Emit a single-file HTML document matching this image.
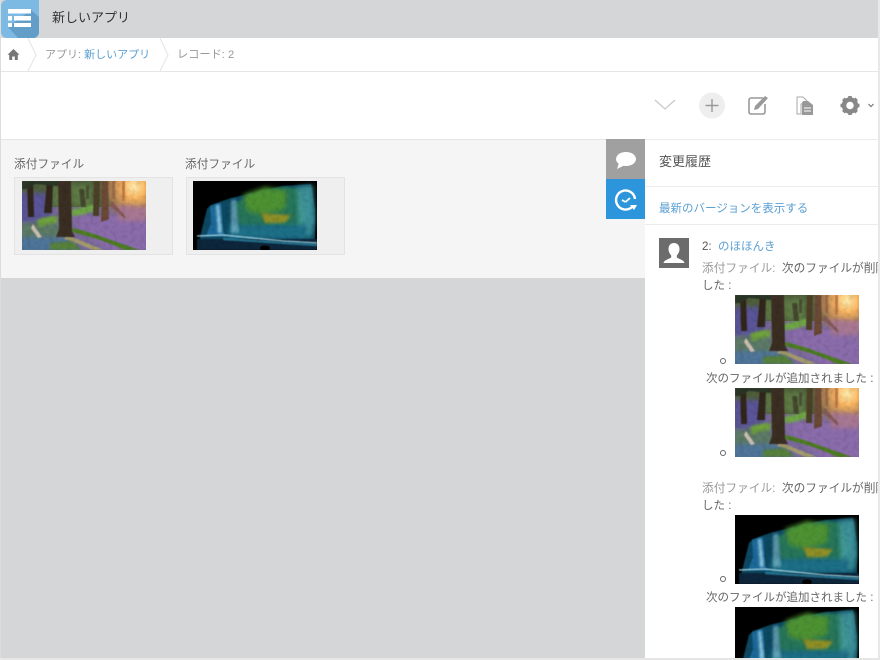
<!DOCTYPE html>
<html lang="ja"><head><meta charset="utf-8"><title>新しいアプリ</title>
<style>
html,body{margin:0;padding:0;width:880px;height:660px;overflow:hidden;background:#d5d6d8}
#w{width:880px;height:660px;position:relative;overflow:hidden;font-family:"Liberation Sans","Noto Sans CJK JP",sans-serif;font-size:11.500px;color:#777}
.a{position:absolute;white-space:nowrap}
.b{position:absolute}
.l{color:#5a9fd2}
svg.i{position:absolute;overflow:hidden}
</style></head><body><div id="w">
<svg width="0" height="0" style="position:absolute">
<defs>
<filter id="f1" x="-20%" y="-20%" width="140%" height="140%"><feGaussianBlur stdDeviation="0.6"/></filter>
<filter id="f3" x="-40%" y="-40%" width="180%" height="180%"><feGaussianBlur stdDeviation="1.200"/></filter>
<filter id="f2" x="-40%" y="-40%" width="180%" height="180%"><feGaussianBlur stdDeviation="2.500"/></filter>
<filter id="n" x="0" y="0" width="100%" height="100%"><feTurbulence type="fractalNoise" baseFrequency="0.22" numOctaves="2" seed="4"/><feColorMatrix values="0 0 0 0 0  0 0 0 0 0  0 0 0 0 0  0 0 0 2.200 -0.900"/></filter>
<radialGradient id="glow" gradientUnits="userSpaceOnUse" cx="112" cy="6" r="38"><stop offset="0" stop-color="#ffeeb0"/><stop offset=".3" stop-color="#fab762"/><stop offset=".65" stop-color="#c98a5a" stop-opacity=".75"/><stop offset="1" stop-color="#8a7a5a" stop-opacity="0"/></radialGradient>
<symbol id="forest" viewBox="0 0 124 69">
<rect width="124" height="69" fill="#7a6a9c"/>
<rect width="124" height="26" fill="#4f5f3c"/>
<rect x="-4" y="12" width="34" height="30" fill="#5a5598" filter="url(#f2)"/>
<rect x="30" y="4" width="40" height="20" fill="#5e7a45" filter="url(#f2)"/>
<rect x="70" width="54" height="40" fill="url(#glow)"/>
<path d="M-3 42L36 40 42 72H-3Z" fill="#5c7a66" filter="url(#f2)"/>
<path d="M-3 56L44 56 62 72H-3Z" fill="#4f749a" filter="url(#f2)"/>
<path d="M52 34L126 34V72H92L55 46Z" fill="#8a6cab" filter="url(#f2)"/>
<path d="M96 24L126 26V40H96Z" fill="#a87892" filter="url(#f2)"/>
<path d="M48 29C56 28 66 24 73 23L72 30C64 33 56 35 50 35Z" fill="#6fa845" filter="url(#f3)"/>
<path d="M15 39C24 35 30 35 36 35L35 42C28 42 22 45 17 46Z" fill="#6fa33e" filter="url(#f3)"/>
<path d="M50 47C70 51 90 60 118 69H102C85 60 65 55 50 51Z" fill="#4d7d20" filter="url(#f1)"/>
<path d="M45 54C60 60 70 64 82 69H70C60 64 50 60 42 58Z" fill="#a39a6e" filter="url(#f1)"/>
<path d="M28 62L50 60 60 69H28Z" fill="#56803a" filter="url(#f3)"/>
<g filter="url(#f1)" fill="#30261d">
<path d="M36 0H49L50 50 53 56H34L37 48Z" fill="#3a2e20"/>
<path d="M5 0H11L12 36H6Z"/><path d="M25 0H31L30 32H22Z"/>
<path d="M72 0H78L77 35H71Z" fill="#4c4028"/><path d="M80 0H86L87 38 79 41Z" fill="#6a4a36"/>
<path d="M57 8H62L64 26H59Z" fill="#45482e"/><path d="M64 4H67V18H64Z" fill="#4a5034"/>
<path d="M0 0H36V5L14 3 4 8H0Z" fill="#2c3628"/>
<path d="M90 0H93V18H90Z" fill="#9a6a48"/><path d="M100 0H103V20H100Z" fill="#c07a48"/>
<path d="M90 20L104 36 102 37 88 25Z" fill="#85585a"/>
</g>
<path d="M11 43L20 56 16 57 9 47Z" fill="#c9bdb0" filter="url(#f1)"/>
<rect width="124" height="69" filter="url(#n)" opacity=".1"/>
</symbol>
<symbol id="fall" viewBox="0 0 124 69">
<rect width="124" height="69" fill="#000"/>
<path d="M6 60L14 28 18 24 38 17 60 12 90 5 118 3 122 28 122 62Z" fill="#0f4a62" filter="url(#f1)"/>
<path d="M42 22L60 13 90 6 106 7 112 30 110 46H46Z" fill="#28745a" filter="url(#f3)"/>
<path d="M50 14L72 6 94 10 92 28 70 34 54 30Z" fill="#4d9230" filter="url(#f2)"/>
<path d="M68 32L98 34 92 42 72 43Z" fill="#8f9028" filter="url(#f3)"/>
<path d="M104 6L120 4 122 40 118 56 106 54Z" fill="#4aa3a6" opacity=".8" filter="url(#f2)"/>
<path d="M36 44H114V58H36Z" fill="#1a6f88" filter="url(#f2)"/>
<g>
<path d="M17 25L28 22 30 50 34 56 13 55 18 42Z" fill="#1c699b" filter="url(#f1)"/>
<path d="M23 24H26L29 52H25Z" fill="#9ed6e8" opacity=".9" filter="url(#f3)"/>
<path d="M38 20L43 18 46 52H38Z" fill="#8cc6d8" opacity=".6" filter="url(#f3)"/>
<path d="M4 58H124V69H4Z" fill="#07283a" filter="url(#f1)"/>
<path d="M4 55L30 54 60 57 90 60 124 62" fill="none" stroke="#a8d8e6" stroke-width="1.500" opacity=".85" filter="url(#f1)"/>
<path d="M30 58L124 64" fill="none" stroke="#2f8cab" stroke-width="2.500" opacity=".7" filter="url(#f1)"/>
<ellipse cx="72" cy="67" rx="5" ry="2.500" fill="#000"/>
</g>
<rect width="124" height="69" filter="url(#n)" opacity=".1"/>
</symbol>
</defs></svg>

<!-- header -->
<div class="b" style="left:0;top:0;width:880px;height:38px;background:#d5d6d8"></div>
<svg class="i" style="left:1px;top:0" width="38" height="38" viewBox="0 0 38 38">
<path d="M0 6a6 6 0 0 1 6-6H38V32a6 6 0 0 1-6 6H6a6 6 0 0 1-6-6Z" fill="#7cbae4"/>
<path d="M7 27L30 10 38 17V32a6 6 0 0 1-6 6H17Z" fill="#639ec8"/>
<path d="M7 9H30V13.500H7ZM7 16H11V20.500H7ZM13 16H30V20.500H13ZM7 23H11V27H7ZM13 23H30V27H13Z" fill="#fff"/>
</svg>
<div class="a" style="left:52px;top:9px;font-size:13px;line-height:17px;color:#333">新しいアプリ</div>

<!-- breadcrumb -->
<div class="b" style="left:0;top:38px;width:880px;height:34px;background:#fff;border-bottom:1px solid #e6e6e6;box-sizing:border-box"></div>
<svg class="i" style="left:7px;top:48px" width="13" height="13" viewBox="0 0 13 13"><path d="M6.500 1L12.500 6.800H10.800V12H7.800V8.500H5.200V12H2.200V6.800H.5Z" fill="#777"/></svg>
<svg class="i" style="left:26px;top:38px" width="12" height="34"><path d="M2 0L10 17 2 33" fill="none" stroke="#e4e4e4"/></svg>
<svg class="i" style="left:158px;top:38px" width="12" height="34"><path d="M2 0L10 17 2 33" fill="none" stroke="#e4e4e4"/></svg>
<div class="a" style="left:45px;top:47px;line-height:16px;font-size:11px;color:#999">アプリ:&nbsp;<span class="l">新しいアプリ</span></div>
<div class="a" style="left:177px;top:47px;line-height:16px;font-size:11.200px;color:#999">レコード: 2</div>

<!-- toolbar -->
<div class="b" style="left:0;top:72px;width:880px;height:67px;background:#fff"></div>
<svg class="i" style="left:650px;top:90px" width="230" height="32" viewBox="0 0 230 32">
<path d="M5 10L15 19 25 10" fill="none" stroke="#c8c8c8" stroke-width="1.200"/>
<circle cx="62" cy="15.500" r="13" fill="#eee"/>
<path d="M62 9V22M55.500 15.500H68.500" stroke="#999" stroke-width="1.400" fill="none"/>
<path d="M113 8H101a2 2 0 0 0-2 2V22a2 2 0 0 0 2 2H113a2 2 0 0 0 2-2V14" fill="none" stroke="#999" stroke-width="1.600"/>
<path d="M104 20L105 16 115 6 118 8 108 19Z" fill="#999"/>
<path d="M147 7H153L157 11V14H151V24H147Z" fill="none" stroke="#aaa"/>
<path d="M153 11H158L163 15V25H152V13Z" fill="#999"/><path d="M154 18H161M154 21H161" stroke="#fff"/>
<circle cx="200" cy="15.500" r="6" fill="none" stroke="#888" stroke-width="4.500"/>
<path d="M200 6V10M200 21V25M190.500 15.500H194.500M205.500 15.500H209.500M193.300 8.800L196 11.500M204 19.500L206.700 22.200M206.700 8.800L204 11.500M196 19.500L193.300 22.200" stroke="#888" stroke-width="3.600"/>
<path d="M218.500 14L221 16.500 223.500 14" fill="none" stroke="#777" stroke-width="1.200"/>
</svg>

<!-- record panel -->
<div class="b" style="left:0;top:139px;width:645px;height:139px;background:#f5f5f5;border-top:1px solid #e5e5e5;box-sizing:border-box"></div>
<div class="a" style="left:14px;top:157px;line-height:16px;font-size:11.700px;color:#666">添付ファイル</div>
<div class="a" style="left:185px;top:157px;line-height:16px;font-size:11.700px;color:#666">添付ファイル</div>
<div class="b" style="left:14px;top:177px;width:159px;height:78px;background:#efefef;border:1px solid #e3e3e3;box-sizing:border-box"></div>
<div class="b" style="left:186px;top:177px;width:159px;height:78px;background:#efefef;border:1px solid #e3e3e3;box-sizing:border-box"></div>
<svg class="i" style="left:22px;top:181px" width="124" height="69"><use href="#forest"/></svg>
<svg class="i" style="left:193px;top:181px" width="124" height="69"><use href="#fall"/></svg>

<!-- side tabs -->
<div class="b" style="left:606px;top:139px;width:39px;height:40px;background:#a0a0a0"></div>
<div class="b" style="left:606px;top:179px;width:39px;height:40px;background:#2c95dc"></div>
<svg class="i" style="left:606px;top:139px" width="39" height="80" viewBox="0 0 39 80">
<ellipse cx="20" cy="20" rx="10" ry="7" fill="#fff"/><path d="M13 24L11 30 19 26Z" fill="#fff"/>
<path d="M26 68A9.500 9.500 0 1 1 29 60" fill="none" stroke="#fff" stroke-width="2.400"/>
<path d="M19.500 63L24 59M19.500 63L16 61" stroke="#fff" stroke-width="1.800"/>
<path d="M24 66H31L28 71Z" fill="#fff"/>
</svg>

<!-- right panel -->
<div class="b" style="left:645px;top:139px;width:235px;height:521px;background:#fff;border-top:1px solid #ececec;box-sizing:border-box"></div>
<div class="a" style="left:659px;top:154px;line-height:16px;font-size:13px;color:#555">変更履歴</div>
<div class="b" style="left:645px;top:186px;width:235px;height:1px;background:#ececec"></div>
<div class="a l" style="left:659px;top:201px;line-height:16px">最新のバージョンを表示する</div>
<div class="b" style="left:645px;top:224px;width:235px;height:1px;background:#ececec"></div>
<svg class="i" style="left:659px;top:238px" width="30" height="30" viewBox="0 0 30 30">
<rect width="30" height="30" fill="#6c6c6c"/>
<path d="M15 5c3.500 0 5.500 2.500 5.500 6 0 3-1.500 5-2.700 6.500v2C20 21 25 22 25.500 25H4.500C5 22 10 21 12.200 19.500v-2C11 16 9.500 14 9.500 11c0-3.500 2-6 5.500-6Z" fill="#fff"/>
</svg>
<div class="a" style="left:702px;top:239px;line-height:16px;color:#555">2:&nbsp; <span class="l">のほほんき</span></div>

<div class="a" style="left:702px;top:261px;line-height:16px;width:176px;overflow:hidden;font-size:11.700px;color:#999">添付ファイル:&nbsp; <span style="color:#666">次のファイルが削除</span></div>
<div class="a" style="left:702px;top:278px;line-height:16px;color:#666">した :</div>
<svg class="i" style="left:735px;top:295px" width="124" height="69"><use href="#forest"/></svg>
<div class="b" style="left:720px;top:358px;width:4px;height:4px;border:1px solid #666;border-radius:50%"></div>
<div class="a" style="left:706px;top:371px;line-height:16px;color:#666">次のファイルが追加されました :</div>
<svg class="i" style="left:735px;top:388px" width="124" height="69"><use href="#forest"/></svg>
<div class="b" style="left:720px;top:450px;width:4px;height:4px;border:1px solid #666;border-radius:50%"></div>

<div class="a" style="left:702px;top:481px;line-height:16px;width:176px;overflow:hidden;font-size:11.700px;color:#999">添付ファイル:&nbsp; <span style="color:#666">次のファイルが削除</span></div>
<div class="a" style="left:702px;top:498px;line-height:16px;color:#666">した :</div>
<svg class="i" style="left:735px;top:515px" width="124" height="69"><use href="#fall"/></svg>
<div class="b" style="left:720px;top:576px;width:4px;height:4px;border:1px solid #666;border-radius:50%"></div>
<div class="a" style="left:706px;top:590px;line-height:16px;color:#666">次のファイルが追加されました :</div>
<svg class="i" style="left:735px;top:607px" width="124" height="69"><use href="#fall"/></svg>

<!-- window edges -->
<div class="b" style="left:0;top:0;width:1px;height:660px;background:#dcdcdc"></div>
<div class="b" style="left:878px;top:0;width:2px;height:660px;background:#e8e8e8"></div>
<div class="b" style="left:0;top:658px;width:880px;height:2px;background:#e6e6e6"></div>
</div></body></html>
